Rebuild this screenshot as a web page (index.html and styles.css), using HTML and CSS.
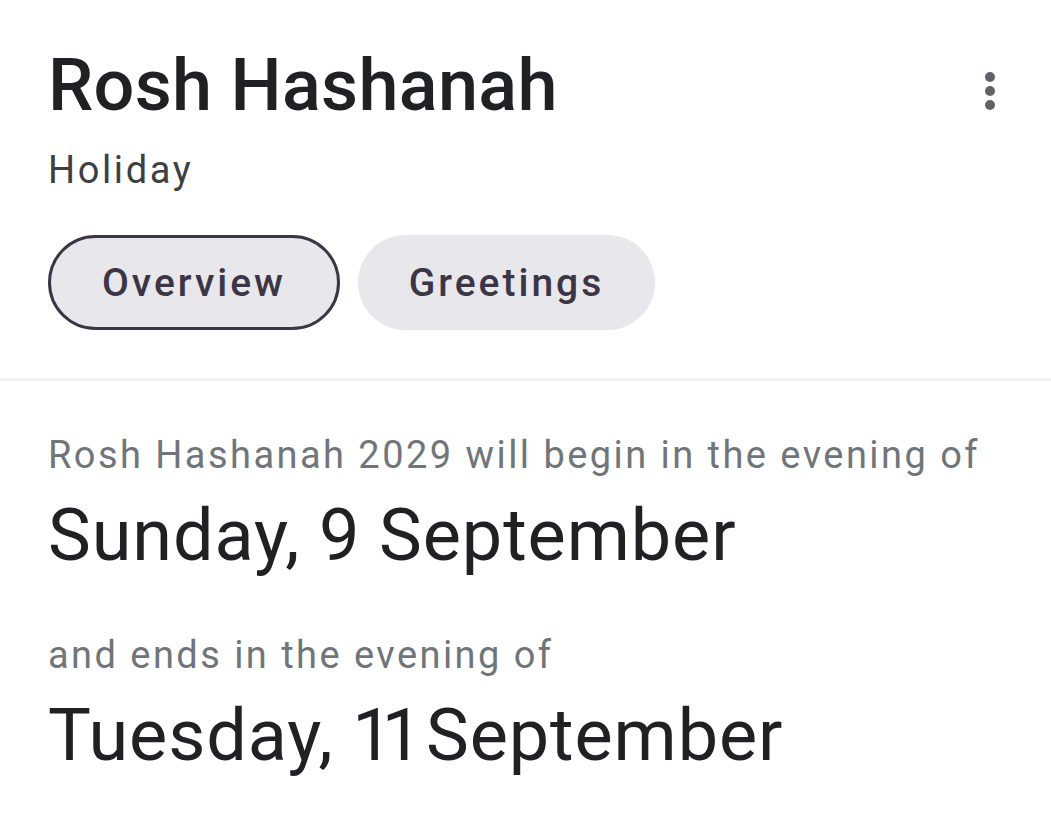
FILE: index.html
```html
<!DOCTYPE html>
<html lang="en">
<head>
<meta charset="utf-8">
<title>Rosh Hashanah</title>
<link rel="stylesheet" href="styles.css">
</head>
<body>
<div class="card">
  <header class="head">
    <div class="titles">
      <h1 class="title">Rosh Hashanah</h1>
      <div class="subtitle">Holiday</div>
    </div>
    <button class="more" aria-label="More options">
      <svg width="12" height="40" viewBox="0 0 12 40"><circle cx="6" cy="6" r="5" fill="#5f6368"/><circle cx="6" cy="20" r="5" fill="#5f6368"/><circle cx="6" cy="34" r="5" fill="#5f6368"/></svg>
    </button>
  </header>
  <nav class="chips">
    <span class="chip chip-active">Overview</span>
    <span class="chip">Greetings</span>
  </nav>
  <div class="divider"></div>
  <section class="body">
    <p class="label">Rosh Hashanah 2029 will begin in the evening of</p>
    <p class="date">Sunday, 9 September</p>
    <p class="label label-2">and ends in the evening of</p>
    <p class="date">Tuesday, <span class="num">11</span> September</p>
  </section>
</div>
</body>
</html>
```
FILE: styles.css
```css
html, body {
  margin: 0;
  padding: 0;
  background: #ffffff;
}
body {
  font-family: Roboto, "Liberation Sans", sans-serif;
  width: 1051px;
  height: 822px;
  overflow: hidden;
}
.card {
  display: flex;
  flex-direction: column;
}
.head {
  display: flex;
  justify-content: space-between;
  align-items: flex-start;
  padding: 44px 55px 0 48px;
}
.title {
  margin: 0;
  font-size: 72px;
  font-weight: 500;
  line-height: 84px;
  color: #202124;
  letter-spacing: 0.3px;
}
.subtitle {
  margin-top: 20px;
  font-size: 38px;
  line-height: 44px;
  color: #3c4043;
  letter-spacing: 2.6px;
}
.more {
  background: none;
  border: 0;
  padding: 0;
  margin-top: 27px;
  display: flex;
}
.chips {
  display: flex;
  gap: 18px;
  padding: 43px 48px 0 48px;
}
.chip {
  box-sizing: border-box;
  height: 95px;
  display: flex;
  align-items: center;
  justify-content: center;
  padding: 0;
  border-radius: 48px;
  background: #e8e7eb;
  color: #3b3545;
  font-size: 39px;
  font-weight: 500;
  letter-spacing: 3px;
}
.chip-active {
  border: 3px solid #3b3545;
  width: 292px;
}
.chip:not(.chip-active) {
  width: 297px;
}
.divider {
  margin-top: 48px;
  height: 3px;
  background: #f1f1f1;
}
.body {
  padding: 0 48px;
}
.label {
  margin: 52px 0 0 0;
  font-size: 38px;
  line-height: 44px;
  color: #70757a;
  letter-spacing: 2.45px;
  white-space: nowrap;
}
.label-2 {
  margin-top: 55px;
}
.date {
  margin: 17px 0 0 0;
  font-size: 72px;
  line-height: 84px;
  color: #202124;
  letter-spacing: 0.9px;
  white-space: nowrap;
}
.num {
  letter-spacing: -11px;
  margin-right: -4px;
}
```
